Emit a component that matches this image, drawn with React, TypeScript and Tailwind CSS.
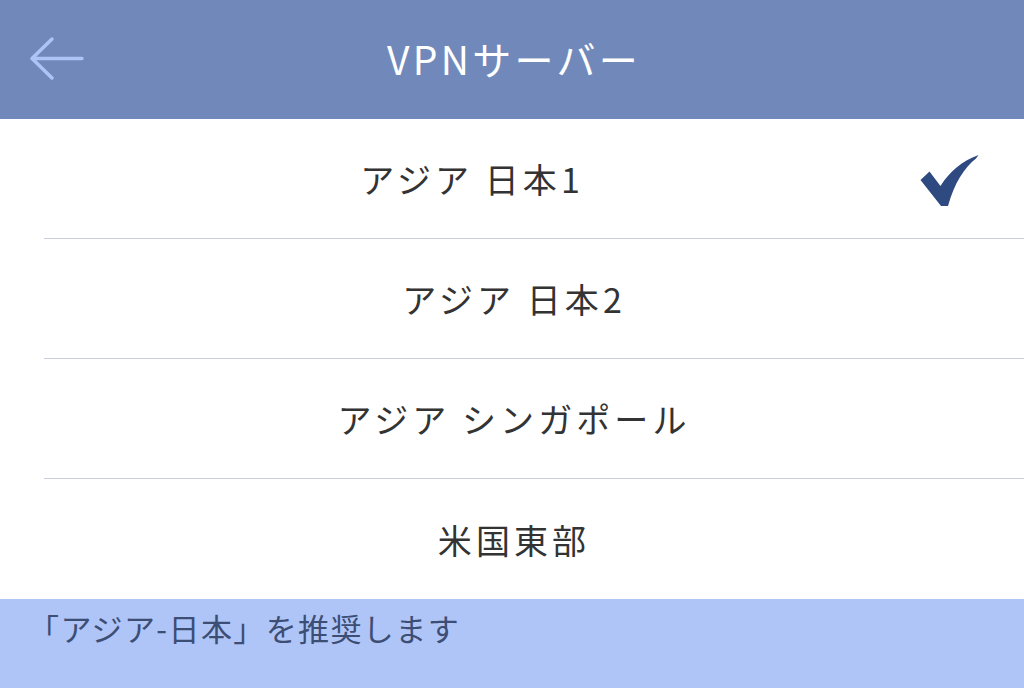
import React from "react";

const rows = ["アジア 日本1", "アジア 日本2", "アジア シンガポール", "米国東部"];

export default function App() {
  return (
    <div className="w-[1024px] h-[688px] flex flex-col bg-white overflow-hidden" style={{ fontFamily: '"Noto Sans CJK JP", "Noto Sans", sans-serif' }}>
      <div className="h-[119px] bg-[#7189ba] flex items-center relative shrink-0">
        <svg className="absolute left-[29px] top-[36px]" width="56" height="46" viewBox="0 0 56 46" fill="none">
          <path d="M53 22.5H3M23 3L3 22.5L23 42" stroke="#aec4f7" strokeWidth="3.5" strokeLinecap="round" strokeLinejoin="round" />
        </svg>
        <div className="flex-1 text-center text-white text-[39px] tracking-[0.085em] leading-none pb-[2px] pl-[4px]">VPNサーバー</div>
      </div>
      <div className="flex flex-col">
        {rows.map((r, i) => (
          <div key={i} className="h-[120px] flex flex-col">
            <div className="flex-1 flex items-center">
              <div className="flex-1 text-center text-[34px] tracking-[0.12em] text-[#333333] pl-[4px]">{r}</div>
              {i === 0 && (
                <div className="w-[84px] flex justify-end shrink-0">
                  <svg className="shrink-0 mr-[44px] mt-[4px]" width="60" height="52" viewBox="0 0 60 52">
                    <path d="M0.5 25 L9.5 16.5 L20.5 31 C30 16 42 6 58.5 0 L56 3.5 C44 13 34.5 28 28 51 L21 51 Z" fill="#2f4a80" />
                  </svg>
                </div>
              )}
            </div>
            {i < 3 && <div className="ml-[44px] h-[1px] bg-[#c7d0dc]" />}
          </div>
        ))}
      </div>
      <div className="flex-1 bg-[#afc5f8] pl-[28px] pt-[9px]">
        <div className="text-[31px] tracking-[0.045em] text-[#3d4e74] leading-[40px]">「アジア-日本」を推奨します</div>
      </div>
    </div>
  );
}
